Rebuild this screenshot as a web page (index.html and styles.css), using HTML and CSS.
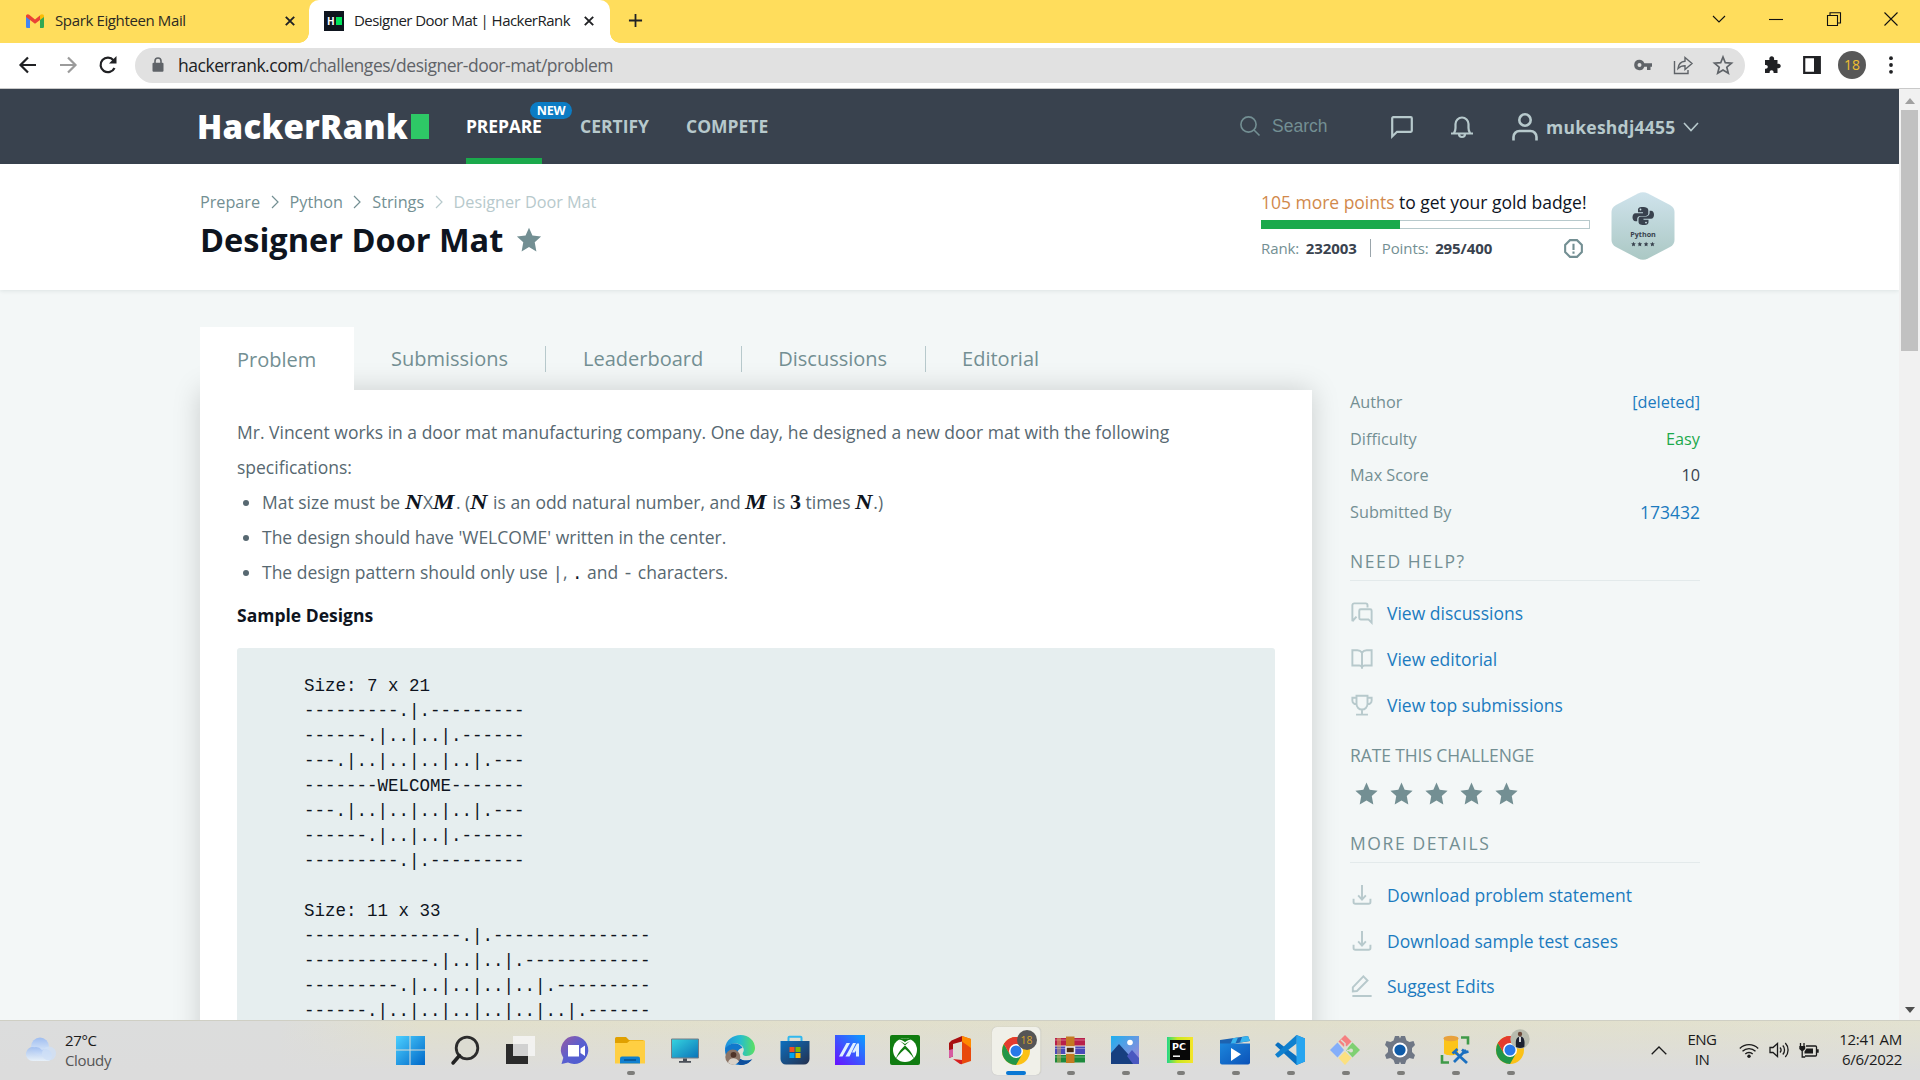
FILE: index.html
```html
<!DOCTYPE html>
<html lang="en">
<head>
<meta charset="utf-8">
<title>Designer Door Mat | HackerRank</title>
<link rel="stylesheet" href="styles.css">
</head>
<body>
<svg class="defs" aria-hidden="true">
  <defs>
    <symbol id="star" viewBox="0 0 24 24"><path d="M12 0.6l3.3 7.6 8.3 0.8-6.1 5.6 1.6 8.8L12 19.3l-7.1 4.1 1.6-8.8L0.4 9l8.3-.8z"/></symbol>
    <symbol id="download" viewBox="0 0 24 24"><path d="M12 1v16M7.800 12.500l4.200 4.500 4.200-4.500M2.800 16v3.500a2 2 0 0 0 2 2h14.400a2 2 0 0 0 2-2V16"/></symbol>
    <symbol id="crumb" viewBox="0 0 8 14"><path d="M1 1l6 6-6 6"/></symbol>
    <symbol id="chrome" viewBox="0 0 30 30">
      <circle cx="15" cy="15" r="14" fill="#fbc116"/>
      <path d="M15 15L2.900 8A14 14 0 0 1 27.100 8H15z" fill="#e33b2e"/>
      <path d="M2.900 8A14 14 0 0 0 15 29l6-10.500L15 15 9 18.500z" fill="#229648"/>
      <path d="M2.900 8L9 18.500 15 8H27.100A14 14 0 0 0 2.900 8z" fill="#e33b2e"/>
      <circle cx="15" cy="15" r="7" fill="#fff"/><circle cx="15" cy="15" r="5.500" fill="#2879e8"/>
    </symbol>
    <linearGradient id="gWin" x1="0" y1="0" x2="1" y2="1"><stop offset="0" stop-color="#4cd0ff"/><stop offset="1" stop-color="#0067c8"/></linearGradient>
    <linearGradient id="gChat" x1="0" y1="0" x2="1" y2="1"><stop offset="0" stop-color="#9a5aa0"/><stop offset=".5" stop-color="#5a5fd0"/><stop offset="1" stop-color="#4a5bd0"/></linearGradient>
    <linearGradient id="gPc" x1="0" y1="0" x2="1" y2="1"><stop offset="0" stop-color="#35d5e0"/><stop offset="1" stop-color="#0b72b8"/></linearGradient>
    <linearGradient id="gEdge" x1="0" y1="0" x2="1" y2="0"><stop offset="0" stop-color="#1f8fe0"/><stop offset=".5" stop-color="#25bcd0"/><stop offset="1" stop-color="#5be060"/></linearGradient>
    <linearGradient id="gStore" x1="0" y1="0" x2="1" y2="1"><stop offset="0" stop-color="#0d70c0"/><stop offset="1" stop-color="#24304e"/></linearGradient>
    <linearGradient id="gMa" x1="0" y1="1" x2="1" y2="0"><stop offset="0" stop-color="#6a10ff"/><stop offset="1" stop-color="#0aa0ff"/></linearGradient>
    <linearGradient id="gFilm" x1="0" y1="0" x2="1" y2="1"><stop offset="0" stop-color="#1c86dc"/><stop offset="1" stop-color="#0b52b8"/></linearGradient>
    <linearGradient id="gHex" x1="0" y1="0" x2="0" y2="1"><stop offset="0" stop-color="#cfe3ec"/><stop offset="1" stop-color="#abc8c4"/></linearGradient>
    <linearGradient id="gCloud" x1="0" y1="0" x2="0" y2="1"><stop offset="0" stop-color="#9fbdf0"/><stop offset="1" stop-color="#e9f3fc"/></linearGradient>
    <linearGradient id="gPhoto" x1="0" y1="0" x2="1" y2="1"><stop offset="0" stop-color="#1fb0ee"/><stop offset="1" stop-color="#a783d8"/></linearGradient>
    <linearGradient id="gPyc" x1="0" y1="0" x2="1" y2="0"><stop offset="0" stop-color="#21d789"/><stop offset=".4" stop-color="#c8e820"/><stop offset="1" stop-color="#f5e52a"/></linearGradient>
  </defs>
</svg>

<header class="tabstrip">
  <div class="tab tab-mail">
    <svg class="fav-mail" viewBox="0 0 18 14"><path d="M0 2v10.500C0 13.500.6 14 1.500 14H4V5z" fill="#4285f4"/><path d="M18 2v10.500c0 1-.6 1.500-1.500 1.500H14V5z" fill="#34a853"/><path d="M0 2C0 .5 2 -.4 3.200.8L9 5.500 14.800.8 14 6 9 9.800 4 6 0 3z" fill="#ea4335"/><path d="M14 6V1.300C15.500-.4 18 .2 18 2.200V3z" fill="#fbbc04"/></svg>
    <span class="tab-title t-mail">Spark Eighteen Mail</span>
    <svg class="x" viewBox="0 0 10 10"><path d="M.8.8l8.400 8.400M9.200.8L.8 9.200"/></svg>
  </div>
  <div class="tab tab-active">
    <span class="fav-hr"><b>H</b><i></i></span>
    <span class="tab-title t-hr">Designer Door Mat | HackerRank</span>
    <svg class="x" viewBox="0 0 10 10"><path d="M.8.8l8.400 8.400M9.200.8L.8 9.200"/></svg>
  </div>
  <svg class="plus" viewBox="0 0 16 16"><path d="M8 1v14M1 8h14"/></svg>
  <div class="winbtns">
    <svg viewBox="0 0 14 14"><path d="M1 4l6 6 6-6"/></svg>
    <svg viewBox="0 0 14 14"><path d="M0 7.500h14"/></svg>
    <svg viewBox="0 0 14 14"><path d="M.5 3.500h10v10H.5zM3 3V.8h10.500V11H11"/></svg>
    <svg viewBox="0 0 14 14"><path d="M.5.5l13 13M13.500.5l-13 13"/></svg>
  </div>
</header>

<div class="toolbar">
  <svg class="tb-ico" viewBox="0 0 20 20"><path d="M18 10H3M10 2.500L2.500 10l7.500 7.500"/></svg>
  <svg class="tb-ico dim" viewBox="0 0 20 20"><path d="M2 10h15M10 2.500l7.500 7.500-7.500 7.500"/></svg>
  <svg class="tb-ico" viewBox="0 0 20 20"><path d="M16.500 13A7.300 7.300 0 1 1 15.500 5.200"/><path d="M18.500 1v7.500H11z" fill="#202124" stroke="none"/></svg>
  <div class="omnibox">
    <svg class="lock" viewBox="0 0 12 16"><path d="M1.500 5.800h9a1 1 0 0 1 1 1v7a1 1 0 0 1-1 1h-9a1 1 0 0 1-1-1v-7a1 1 0 0 1 1-1z" fill="#5f6368"/><path d="M3 6V4a3 3 0 0 1 6 0v2" fill="none" stroke="#5f6368" stroke-width="1.600"/></svg>
    <span class="url"><b>hackerrank.com</b>/challenges/designer-door-mat/problem</span>
    <svg class="key" viewBox="0 0 18 12"><path fill-rule="evenodd" d="M5.500.8a5.200 5.200 0 0 1 4.800 3.500H18v3.400h-1.500V11H13V7.700h-2.700A5.200 5.200 0 1 1 5.500.8zm0 3.200a2 2 0 1 0 0 4 2 2 0 0 0 0-4z" fill="#5f6368"/></svg>
    <svg class="om-ico" viewBox="0 0 20 20"><path d="M1.500 6v12.500H15V15M5 13.500C5.500 9 8 6.500 12 6.200V2.500l7 6-7 6v-3.700c-3 0-5 .7-7 2.700z"/></svg>
    <svg class="om-ico" viewBox="0 0 20 20"><path d="M10 2l2.300 5.700 6.200.5-4.700 4 1.500 6L10 15l-5.300 3.200 1.500-6-4.700-4 6.200-.5z" stroke-width="1.700"/></svg>
  </div>
  <svg class="puzzle" viewBox="0 0 18 18"><path fill="#202124" d="M2 4h4.500C5.800 2 7 .3 8.700.3S11.600 2 11 4h3.500v4c1.700-.7 3.200.4 3.200 2s-1.500 2.700-3.200 2v5h-4c.4-1.700-.5-2.800-1.900-2.800S6.300 15.300 6.700 17H2v-4.300c1.700.4 2.800-.6 2.800-1.900S3.700 8.600 2 9z"/></svg>
  <svg class="panel" viewBox="0 0 18 18"><path d="M1.200 1.200h15.600v15.600H1.200z" fill="none" stroke="#202124" stroke-width="2.200"/><path d="M11 1h6v16h-6z" fill="#202124"/></svg>
  <span class="avatar">18</span>
  <svg class="dots" viewBox="0 0 4 18"><circle cx="2" cy="2.200" r="1.900"/><circle cx="2" cy="9" r="1.900"/><circle cx="2" cy="15.800" r="1.900"/></svg>
</div>

<div class="viewport">
<main class="page">
  <nav class="nav">
    <div class="logo"><span>HackerRank</span><i></i></div>
    <a class="nav-link prepare">PREPARE<em>NEW</em></a>
    <a class="nav-link certify">CERTIFY</a>
    <a class="nav-link compete">COMPETE</a>
    <div class="nav-search">
      <svg viewBox="0 0 20 20"><circle cx="8.500" cy="8.500" r="7.600"/><path d="M14 14l5.500 5.500"/></svg>
      <span>Search</span>
    </div>
    <svg class="nav-ico chat" viewBox="0 0 22 22"><path d="M1.200 20.500V2.200a1 1 0 0 1 1-1h17.600a1 1 0 0 1 1 1v12.600a1 1 0 0 1-1 1H6z"/></svg>
    <svg class="nav-ico bell" viewBox="0 0 24 22"><path d="M1 17.500h22M4 17c1-1.500 1.500-3 1.500-5V8a6.500 6.500 0 0 1 13 0v4c0 2 .5 3.500 1.500 5M9 18a3 3 0 0 0 6 0"/></svg>
    <svg class="nav-ico user" viewBox="0 0 26 28"><circle cx="13" cy="7" r="5.700"/><path d="M1.500 27.500V24a6 6 0 0 1 6-6h11a6 6 0 0 1 6 6v3.500"/></svg>
    <span class="uname">mukeshdj4455</span>
    <svg class="caret" viewBox="0 0 16 10"><path d="M1 1l7 7.500L15 1"/></svg>
  </nav>

  <section class="head">
    <div class="head-left">
      <div class="crumbs">
        <span>Prepare</span><svg><use href="#crumb"/></svg>
        <span>Python</span><svg><use href="#crumb"/></svg>
        <span>Strings</span><svg class="faint"><use href="#crumb"/></svg>
        <span class="faint">Designer Door Mat</span>
      </div>
      <h1>Designer Door Mat<svg><use href="#star"/></svg></h1>
    </div>
    <div class="head-right">
      <p class="more"><span>105 more points</span> to get your gold badge!</p>
      <div class="bar"><i></i></div>
      <div class="rank">
        <span>Rank:</span><b>232003</b><i></i><span>Points:</span><b>295/400</b>
        <svg viewBox="0 0 20 20"><path d="M6.300 1.200h7.400l5.100 5.100v7.400l-5.100 5.100H6.300l-5.100-5.100V6.300z"/><path d="M10 5v6.500M10 13.200v2.200"/></svg>
      </div>
    </div>
    <svg class="badge" viewBox="0 0 64 68">
      <path d="M27 1.500q5-2.500 10 0l22 11.500q4.500 2.500 4.500 7v28q0 4.500-4.500 7l-22 11.500q-5 2.500-10 0L5 55q-4.500-2.500-4.500-7V20q0-4.500 4.500-7z" fill="url(#gHex)"/>
      <g fill="#39424e"><path d="M31.500 15c-4 0-4.500 1.500-4.500 3.300v2h5v.9h-7.500c-2 0-3 1.800-3 4s1 4 3 4h1.700v-2.300c0-1.700 1.500-3 3.200-3H35c1.400 0 2.300-1 2.300-2.300v-3.300c0-2-1.700-3.300-5.800-3.300z"/><path d="M33 33c4 0 4.500-1.500 4.500-3.300v-2h-5v-.9H40c2 0 3-1.800 3-4s-1-4-3-4h-1.400v2.300c0 1.700-1.500 3.400-3.200 3.400H29.800c-1.400 0-2.300 1-2.300 2.300v2.900c0 2 1.500 3.300 5.500 3.300z"/></g>
      <circle cx="29.500" cy="17.500" r=".9" fill="#cfe0e6"/><circle cx="35" cy="30.600" r=".9" fill="#cfe0e6"/>
      <text x="32" y="45">Python</text>
      <g fill="#39424e"><use href="#star" x="20" y="49.500" width="5" height="5"/><use href="#star" x="26.300" y="49.500" width="5" height="5"/><use href="#star" x="32.600" y="49.500" width="5" height="5"/><use href="#star" x="38.900" y="49.500" width="5" height="5"/></g>
    </svg>
  </section>

  <div class="content">
    <section class="problem">
      <div class="tabs">
        <a class="on">Problem</a><a>Submissions</a><a>Leaderboard</a><a>Discussions</a><a>Editorial</a>
      </div>
      <article class="card">
        <p>Mr. Vincent works in a door mat manufacturing company. One day, he designed a new door mat with the following specifications:</p>
        <ul>
          <li>Mat size must be <var>N</var>X<var class="m">M</var>. (<var>N</var> is an odd natural number, and <var class="m">M</var> is <var class="num">3</var> times <var>N</var>.)</li>
          <li>The design should have 'WELCOME' written in the center.</li>
          <li>The design pattern should only use <code>|</code>, <code class="dot">.</code> and <code>-</code> characters.</li>
        </ul>
        <h2>Sample Designs</h2>
<pre>Size: 7 x 21
---------.|.---------
------.|..|..|.------
---.|..|..|..|..|.---
-------WELCOME-------
---.|..|..|..|..|.---
------.|..|..|.------
---------.|.---------

Size: 11 x 33
---------------.|.---------------
------------.|..|..|.------------
---------.|..|..|..|..|.---------
------.|..|..|..|..|..|..|.------</pre>
      </article>
    </section>
    <aside class="side">
      <dl>
        <div><dt>Author</dt><dd class="blue">[deleted]</dd></div>
        <div><dt>Difficulty</dt><dd class="green">Easy</dd></div>
        <div><dt>Max Score</dt><dd>10</dd></div>
        <div><dt>Submitted By</dt><dd class="blue big">173432</dd></div>
      </dl>
      <h3>NEED HELP?</h3>
      <a class="link v"><svg viewBox="0 0 24 24"><path d="M1.500 21V3.500a2 2 0 0 1 2-2H16a2 2 0 0 1 2 2V6M1.500 21L6 16M10.500 8H21a1.500 1.500 0 0 1 1.500 1.500V22.500L19 19h-8.500A1.500 1.500 0 0 1 9 17.500v-8A1.500 1.500 0 0 1 10.500 8z"/></svg>View discussions</a>
      <a class="link v"><svg viewBox="0 0 24 24"><path d="M12 5v17.500M12 5c-1.500-2-3-2.500-5-2.500H1.500V19H9c1.500 0 2.500.7 3 2M12 5c1.500-2 3-2.500 5-2.500h5.500V19H15c-1.500 0-2.500.7-3 2"/></svg>View editorial</a>
      <a class="link v"><svg viewBox="0 0 24 24"><path d="M6 2h12v9a6 6 0 0 1-12 0zM12 17v5.500M5.500 22.500h13M6 4H1.500v3a4 4 0 0 0 4.500 4M18 4h4.500v3a4 4 0 0 1-4.500 4"/></svg>View top submissions</a>
      <h4>RATE THIS CHALLENGE</h4>
      <div class="stars"><svg><use href="#star"/></svg><svg><use href="#star"/></svg><svg><use href="#star"/></svg><svg><use href="#star"/></svg><svg><use href="#star"/></svg></div>
      <h3 class="h-more">MORE DETAILS</h3>
      <a class="link"><svg><use href="#download"/></svg>Download problem statement</a>
      <a class="link"><svg><use href="#download"/></svg>Download sample test cases</a>
      <a class="link"><svg viewBox="0 0 24 24"><path d="M2 18v-4.500L13.500 1.500 18 6 6.500 17.500zM1.500 23h21"/></svg>Suggest Edits</a>
    </aside>
  </div>
</main>
<div class="scroll">
  <svg viewBox="0 0 10 6"><path d="M0 6l5-6 5 6z" fill="#a0a0a0"/></svg>
  <i></i>
  <svg class="down" viewBox="0 0 10 6"><path d="M0 0l5 6 5-6z" fill="#505050"/></svg>
</div>
</div>

<footer class="taskbar">
  <div class="weather">
    <svg viewBox="0 0 30 24"><circle cx="14" cy="9.500" r="9" fill="url(#gCloud)"/><path d="M7 24a7 7 0 1 1 1.500-13.800A8 8 0 0 1 16 13a6 6 0 1 1 7 11z" fill="url(#gCloud)" opacity=".9"/><circle cx="23" cy="16.500" r="7" fill="#cfe0f6" opacity=".8"/></svg>
    <div><p>27°C</p><p class="cloudy">Cloudy</p></div>
  </div>
  <div class="apps">
    <div><svg viewBox="0 0 30 30"><path d="M1 1h13.500v13.500H1zM15.500 1H30v13.500H15.500zM1 15.500h13.500V30H1zM15.500 15.500H30V30H15.500z" fill="url(#gWin)"/></svg></div>
    <div><svg viewBox="0 0 30 30"><circle cx="17" cy="13" r="10.800" fill="#dcdcd2" stroke="#2c2c2c" stroke-width="2.800"/><path d="M9.500 20.500L3 28" stroke="#222" stroke-width="3.500" stroke-linecap="round"/></svg></div>
    <div><svg viewBox="0 0 30 30"><path d="M1 9h22v20H1z" fill="#2b2b2b"/><path d="M8 1h22v20H8z" fill="#f7f7f7" opacity=".82"/></svg></div>
    <div><svg viewBox="0 0 30 30"><path d="M15 1a14 14 0 1 1-7 26.500L1.500 29l1.800-6.300A14 14 0 0 1 15 1z" fill="url(#gChat)"/><path d="M8 10h11v11.500H8zM20.500 13.500L25 10.500v10.500l-4.500-3z" fill="#fff"/></svg></div>
    <div class="run"><svg viewBox="0 0 30 30"><path d="M0 3.500a1.500 1.500 0 0 1 1.500-1.500H11l3 3H28.500v8H0z" fill="#e0a000"/><path d="M0 8h12l3-2.500h15V28.500H0z" fill="#ffcf42"/><path d="M5 28.500v-5a2 2 0 0 1 2-2h16a2 2 0 0 1 2 2v5z" fill="#1080d0"/><path d="M9 25h12" stroke="#07508c" stroke-width="1.500"/></svg></div>
    <div><svg viewBox="0 0 30 30"><path d="M1.500 4h27v19h-27z" fill="url(#gPc)" stroke="#777d85"/><path d="M13 23.500h4V26h-4zM9 26h12v1.800H9z" fill="#4a4f57"/></svg></div>
    <div><svg viewBox="0 0 30 30"><path d="M0 13C1 5 8 0 15.500 0 24 0 30 6 30 13c0 5-4 8-8.500 8-3 0-4.500-1.500-3.500-3.500.5-1 1-2 .7-3.500C18 10.500 14 8 9.500 8.500 4 9 1 12 0 17z" fill="url(#gEdge)"/><path d="M0 15c1-4 5-6.500 9.500-6.500 4 0 7 2 8 4.500-4 .5-6 4-5 8 1.500 4 8 6 14 3.500C23.500 28.500 19.500 30 15 30 6.500 30 0 23 0 15z" fill="#1178cc"/><path d="M11 15c-1 8 8 13.500 16.500 9C24 28.500 20 30 15 30c-5-3-7.500-11-4-15z" fill="#0e4f9c"/><circle cx="7.800" cy="22" r="7.500" fill="#8b7466"/><circle cx="8.500" cy="19.800" r="2.900" fill="#4f3428"/><path d="M3 27.500c1-5 8-6 11-1a7.500 7.500 0 0 1-11 1z" fill="#d8d1c8"/></svg></div>
    <div><svg viewBox="0 0 30 30"><path d="M8.500 7V2.800a1 1 0 0 1 1-1h11a1 1 0 0 1 1 1V7" fill="none" stroke="#31b8ee" stroke-width="2"/><path d="M.5 6h29v18a5.500 5.500 0 0 1-5.500 5.500H6A5.500 5.500 0 0 1 .5 24z" fill="url(#gStore)"/><path d="M9.500 12h5v5h-5z" fill="#f25022"/><path d="M15.500 12h5v5h-5z" fill="#7fba00"/><path d="M9.500 18h5v5h-5z" fill="#00a4ef"/><path d="M15.500 18h5v5h-5z" fill="#ffb900"/></svg></div>
    <div><svg viewBox="0 0 30 30"><path d="M0 0h30v30H0z" fill="url(#gMa)"/><path d="M4 21.500L11.500 8h3.500L7.500 21.500zM10.500 21.500L18 8h3l-6.500 13.500zM17 17.500L22 8.500h2v13h-3v-6l-1.200 2z" fill="#dff0ff"/></svg></div>
    <div><svg viewBox="0 0 30 30"><rect width="30" height="30" rx="2" fill="#107c10"/><circle cx="15" cy="15" r="12" fill="#fff"/><path d="M8.500 5C11 4 14 6.500 15 7.300 16 6.500 19 4 21.500 5 19 2.500 11 2.500 8.500 5zM5.800 24.500C7 19 11.500 13.500 15 10.500c3.500 3 8 8.500 9.200 14-1.500-3.500-6-8-9.200-10.500-3.200 2.500-7.700 7-9.200 10.500z" fill="#107c10"/><path d="M8 5.500c3 .5 5.500 3.500 7 5 1.500-1.500 4-4.500 7-5-2.500.5-5 2-7 3.500-2-1.500-4.500-3-7-3.500z" fill="#107c10"/></svg></div>
    <div><svg viewBox="0 0 30 30"><path d="M17 1l9 3v22l-9 3z" fill="#e8490c"/><path d="M17 1L6.500 5.500 4 8v15l4-1.500V9l9-2.500z" fill="#a80f10"/><path d="M4 15v8l4-1.500V14z" fill="#d65aa0"/><path d="M8 24l9 1v4.200L15 29z" fill="#d61f1f"/><path d="M17 1l9 3v9l-9-6.500z" fill="#ff8a00"/></svg></div>
    <div class="current"><svg class="c-ico"><use href="#chrome"/></svg><span class="n18">18</span></div>
    <div class="run"><svg viewBox="0 0 30 30"><path d="M0 3h30v7.500H0z" fill="#b8204a"/><path d="M0 11.500h30v7.500H0z" fill="#4a4ab8"/><path d="M0 20h30v7.500H0z" fill="#1c8a3c"/><path d="M0 5h30M0 13.500h30M0 22h30" stroke="#fff" stroke-opacity=".35"/><path d="M3 3v24.500M5 3v24.500" stroke="#d8b060" stroke-width="1"/><path d="M11 1.500h8.500v26.500H11z" fill="#c47a22"/><path d="M11 12h8.500v6H11z" fill="#4a2a12" stroke="#eee" stroke-width="1.500"/></svg></div>
    <div class="run"><svg viewBox="0 0 30 30"><path d="M1 1h28v28H1z" fill="url(#gPhoto)"/><path d="M1 29V18L9 9l18 20z" fill="#173f80"/><path d="M17 21l5-6 7 8v6h-6z" fill="#4a58c0"/><circle cx="20" cy="7.500" r="2.800" fill="#fff"/></svg></div>
    <div class="run"><svg viewBox="0 0 30 30"><path d="M2 2h26v26H2z" fill="url(#gPyc)"/><path d="M5 5h20v20H5z" fill="#080808"/><text class="pc" x="7" y="14.500">PC</text><path d="M8 21.200h7" stroke="#fff" stroke-width="1.500"/></svg></div>
    <div class="run"><svg viewBox="0 0 30 30"><path d="M0 5l28-4 2 5-30 5z" fill="#1d62b0"/><path d="M13 3.200l5-.7-2.500 5.700-5 .8zM22 2l6-1 2 5-10 1.500z" fill="#38b4ee"/><path d="M0 8.500h30v19a2 2 0 0 1-2 2H2a2 2 0 0 1-2-2z" fill="url(#gFilm)"/><path d="M11 13l10 6.300L11 26z" fill="#fff"/></svg></div>
    <div class="run"><svg viewBox="0 0 30 30"><path d="M21.500 0L30 3.500v23L21.500 30 0 10l2.500-2.500h1L22 21.500z" fill="#0a70c0"/><path d="M21.500 0L30 3.500v23L21.500 30z" fill="#27a5f0"/><path d="M0 19.500L21.500 0v8.500L3.500 22.500h-1z" fill="#0f80cf"/></svg></div>
    <div class="run"><svg viewBox="0 0 30 30"><path d="M15 0l6.500 6.500L15 13 8.500 6.500z" fill="#f58080"/><path d="M7.500 7.500L14 15l-6.500 7.500L0 15z" fill="#84aefa"/><path d="M22.500 7.500L30 15l-7.500 7.500L16 15z" fill="#7fd072"/><path d="M15 16.500l6.500 6.500-6.500 7-6.500-7z" fill="#fbe080"/><path d="M11 5l4 3.500v5M17 15.500h5" stroke="#deddd3" stroke-width="1.500" fill="none"/><circle cx="15.500" cy="13" r="2" fill="#deddd3"/><circle cx="21" cy="15.500" r="2" fill="#deddd3"/></svg></div>
    <div class="run"><svg viewBox="0 0 30 30"><path d="M11 1h3l1 2.500L16 1h4l1.500 4.500 3 1.500 4-1 1.500 4-3 3v4l3 3-1.500 4-4-1-3 2L20 29h-4l-1-2.500L14 29h-4l-1.500-4-3-2-4 1L0 20l3-3v-4l-3-3 1.500-4 4 1 3-1.500L10 1z" fill="#6f7785"/><circle cx="15" cy="15" r="7.500" fill="#fff"/><circle cx="15" cy="15" r="5.600" fill="#0f5ba8"/></svg></div>
    <div class="run"><svg viewBox="0 0 30 30"><path d="M4 3v15c0 3 14 3 14 0V3z" fill="#fcc41a"/><ellipse cx="11" cy="3.500" rx="7.500" ry="2.700" fill="#e8a13c"/><path d="M21 2.500h7v7M2 20v7.500h7" fill="none" stroke="#3f9a48" stroke-width="2.600"/><path d="M14 27l12-12M15 17l12 11" stroke="#1c70c0" stroke-width="2.800"/><path d="M12.500 18.500l5-4.500M22 14.500l3 3 3.500-1" stroke="#1c70c0" stroke-width="2.600" fill="none"/></svg></div>
    <div class="run prof"><svg><use href="#chrome"/></svg><svg class="person" viewBox="0 0 20 20"><circle cx="10" cy="10" r="9.700" fill="#b8bcae"/><path d="M6 18c-.5-5-.5-10 4-10.500s5 5.500 4.300 10.500a9.700 9.700 0 0 1-8.300 0z" fill="#1c2230"/><circle cx="10" cy="5" r="2.200" fill="#6b4a3a"/><path d="M9.200 8h1.600v5H9.200z" fill="#fff"/></svg></div>
  </div>
  <div class="tray">
    <svg class="up" viewBox="0 0 16 9"><path d="M.7 8.300L8 1l7.300 7.300"/></svg>
    <div class="lang"><p>ENG</p><p>IN</p></div>
    <svg class="wifi" viewBox="0 0 20 15"><path d="M.8 5.500a13 13 0 0 1 18.400 0M3.500 8.300a9.200 9.200 0 0 1 13 0M6.300 11a5.300 5.300 0 0 1 7.400 0"/><circle cx="10" cy="13.200" r="1.700"/></svg>
    <svg class="vol" viewBox="0 0 20 16"><path d="M1 5.500h3L8.500 1.500v13L4 10.500H1zM11 5.500c1.300 1.500 1.300 3.500 0 5M13.800 3.500c2.300 2.500 2.300 6.500 0 9M16.300 1c3.700 4 3.700 10 0 14"/></svg>
    <svg class="bat" viewBox="0 0 20 15"><path d="M7 3h9.500a1 1 0 0 1 1 1v8a1 1 0 0 1-1 1H6"/><path d="M1.500 0v3M5 0v3M3.200 7v7h3" /><path d="M.3 3h5.900v3L4 8H2.500L.3 6zM7.500 5.500h6.500v5H5.500v-2zM18 6.300h1.700v3.400H18z" fill="#1b1b1b" stroke="none"/></svg>
    <div class="clock"><p>12:41 AM</p><p class="date">6/6/2022</p></div>
  </div>
</footer>
</body>
</html>
```
FILE: styles.css
```css
* { box-sizing: border-box; }
body { margin: 0; width: 1920px; height: 1080px; overflow: hidden; background: #fff; font-family: "Open Sans", "Noto Sans", sans-serif; }
p, h1, h2, h3, h4, ul, dl, dd, pre { margin: 0; font-weight: 400; }
svg { display: block; flex: none; overflow: visible; }
.defs { position: absolute; width: 0; height: 0; }

/* browser chrome */
.tabstrip { display: flex; align-items: center; height: 43px; background: #ffdd5c; }
.tab { display: flex; align-items: center; height: 43px; }
.tab-mail { width: 309px; padding: 0 14px 2px 26px; }
.tab-active { width: 301px; padding: 0 16px 2px 15px; background: #fff; border-radius: 10px 10px 0 0; position: relative; }
.tab-active::before, .tab-active::after { content: ""; position: absolute; bottom: 0; width: 10px; height: 10px; }
.tab-active::before { left: -10px; background: radial-gradient(circle at 0 0, transparent 9.500px, #fff 10px); }
.tab-active::after { right: -10px; background: radial-gradient(circle at 100% 0, transparent 9.500px, #fff 10px); }
.fav-mail { width: 18px; height: 14px; margin-right: 11px; }
.fav-hr { display: flex; align-items: center; gap: 1px; width: 20px; height: 20px; padding-left: 3px; margin-right: 10px; background: #0e141e; flex: none; }
.fav-hr b { color: #fff; font-size: 10px; line-height: 10px; }
.fav-hr i { width: 6px; height: 8px; background: #00e35c; }
.tab-title { flex: 1; font-size: 15px; line-height: 20px; padding-bottom: 2px; color: #2c2a22; white-space: nowrap; }
.t-mail { letter-spacing: -.37px; }
.t-hr { letter-spacing: -.53px; color: #202124; }
.x { width: 10px; height: 10px; }
.x path, .plus path { stroke: #202124; stroke-width: 1.900; fill: none; }
.plus { width: 15px; height: 15px; margin: 0 0 2px 18px; }
.winbtns { display: flex; gap: 43.500px; margin-left: auto; margin-right: 22px; padding-bottom: 5px; }
.winbtns svg { width: 14px; height: 14px; fill: none; stroke: #111; stroke-width: 1.100; }
.toolbar { display: flex; align-items: center; height: 46px; border-bottom: 1px solid #c9c9c9; padding: 0 0 1px 18px; background: #fff; }
.tb-ico { width: 20px; height: 20px; margin-right: 20px; fill: none; stroke: #202124; stroke-width: 2.200; }
.dim { stroke: #9b9b9b; }
.omnibox { display: flex; align-items: center; width: 1610px; height: 35px; margin: 0 18px 0 -3px; padding: 0 12px 0 17px; border-radius: 18px; background: #e1e1e1; }
.lock { width: 12px; height: 16px; margin-right: 14px; }
.url { flex: 1; font-size: 17.500px; letter-spacing: -.47px; color: #5f6368; white-space: nowrap; }
.url b { font-weight: 400; color: #202124; }
.key { width: 18px; height: 12px; margin-right: 21px; }
.om-ico { width: 20px; height: 20px; margin-right: 20px; fill: none; stroke: #5f6368; stroke-width: 1.400; }
.om-ico:last-child { margin-right: 0; }
.puzzle { width: 18px; height: 18px; margin-right: 22px; }
.panel { width: 18px; height: 18px; margin-right: 17px; }
.avatar { width: 28px; height: 28px; margin-right: 23px; border-radius: 50%; background: #585858; color: #f0c030; font-size: 14px; line-height: 28px; text-align: center; }
.dots { width: 4px; height: 18px; fill: #202124; }

/* web page */
.viewport { display: flex; height: 931px; }
.page { width: 1899px; height: 931px; overflow: hidden; background: #f3f7f7; }
.nav { display: flex; align-items: center; height: 75px; padding-left: 200px; background: #39424e; }
.logo { display: flex; align-items: center; width: 229px; margin-right: 37px; }
.logo span { width: 211px; font: 800 33px/40px "Open Sans", sans-serif; letter-spacing: .3px; color: #fff; white-space: nowrap; margin-left: -3px; margin-right: 3px; }
.logo i { width: 18px; height: 25px; background: #2ec866; }
.nav-link { position: relative; height: 75px; line-height: 75px; font-size: 17.500px; font-weight: 700; letter-spacing: -.15px; color: #b7c9cc; }
.prepare { width: 76px; margin-right: 38px; color: #fff; border-bottom: 6px solid #1ba94c; }
.prepare em { position: absolute; left: 64px; top: 13px; width: 42px; height: 17px; border-radius: 9px; background: #0c7cc4; font: 700 12.500px/17px "Open Sans", sans-serif; letter-spacing: -.2px; text-align: center; color: #fff; }
.certify { width: 106px; letter-spacing: 0; }
.compete { width: 554px; letter-spacing: 0; }
.nav-search { display: flex; align-items: center; gap: 12px; width: 151px; font: 17.500px/24px "Liberation Sans", sans-serif; color: #738f93; padding-bottom: 2px; }
.nav-search svg { width: 20px; height: 20px; fill: none; stroke: #738f93; stroke-width: 1.600; }
.nav-ico { fill: none; stroke: #b7c9cc; stroke-width: 2.200; }
.chat { width: 22px; height: 22px; margin-right: 37px; }
.bell { width: 24px; height: 22px; margin-right: 38px; }
.user { width: 26px; height: 28px; margin-right: 8px; stroke-width: 2.600; }
.uname { width: 137px; font-size: 17.500px; font-weight: 700; letter-spacing: .25px; color: #b7c9cc; }
.caret { width: 16px; height: 10px; fill: none; stroke: #b7c9cc; stroke-width: 1.600; }
.head { display: flex; height: 126px; padding: 26px 0 0 200px; background: #fff; box-shadow: 0 1px 4px rgba(30,60,60,.1); }
.head-left { width: 1060px; }
.crumbs { display: flex; align-items: center; height: 24px; font-size: 16.250px; letter-spacing: -.03px; color: #738f93; }
.crumbs svg { width: 8px; height: 14px; margin: 0 11px 0 10.500px; fill: none; stroke: #738f93; stroke-width: 1.200; }
.crumbs .faint { color: #b7c9cc; stroke: #b7c9cc; }
h1 { display: flex; align-items: center; height: 40px; margin-top: 5px; font-size: 32.500px; font-weight: 700; color: #0e141e; white-space: nowrap; }
h1 svg { width: 26px; height: 25px; margin-left: 13px; fill: #738f93; }
.head-right { width: 330px; margin-right: 21px; padding-left: 1px; }
.more { height: 24px; font-size: 17.500px; line-height: 24px; letter-spacing: -.02px; color: #0e141e; white-space: nowrap; }
.more span { color: #d1894b; }
.bar { height: 9px; margin: 6px 0 7px; border: 1px solid #b7c9cc; }
.bar i { display: block; width: 139px; height: 9px; margin: -1px; background: #1ba94c; }
.rank { display: flex; align-items: center; height: 24px; font-size: 15px; letter-spacing: -.08px; color: #738f93; }
.rank b { margin-left: 6.500px; color: #39424e; }
.rank i { width: 1.500px; height: 18px; margin: 0 10.500px 0 13px; background: #9aa5ab; }
.rank svg { width: 19px; height: 19px; margin-left: auto; margin-right: 7px; fill: none; stroke: #738f93; stroke-width: 2.200; }
.badge { width: 64px; height: 68px; margin-top: 2px; }
.badge text { font-size: 7.200px; font-weight: 700; text-anchor: middle; fill: #39424e; }
.content { display: flex; gap: 38px; padding: 37px 0 0 200px; }
.problem { width: 1112px; }
.tabs { display: flex; height: 63px; align-items: center; font-size: 20px; color: #738f93; }
.tabs a { line-height: 26px; margin-top: 1px; padding: 0 37.500px 0 36.500px; border-right: 1px solid #b7c9cc; }
.tabs a.on { position: relative; z-index: 2; line-height: 65px; height: 63px; width: 154px; margin: 0 .5px 0 0; padding: 0 37px; border: 0; background: #fff; }
.tabs a:last-child { border: 0; }
.card { position: relative; height: 720px; padding: 25px 37px; background: #fff; box-shadow: 0 0 26px rgba(0,0,0,.17); font-size: 17.500px; line-height: 35px; color: #576871; }
.card ul { padding-left: 25px; }
var { display: inline-block; width: 18.300px; font: italic bold 22px/20px "Liberation Serif", serif; color: #0e141e; transform: scaleX(1.1); transform-origin: 0 50%; }
var.m { width: 22.800px; }
var.num { width: 11px; font-style: normal; transform: none; }
code { font: 17.500px/20px "Liberation Mono", monospace; }
.dot { color: #0e141e; }
h2 { margin-top: 12px; font-size: 17.500px; font-weight: 700; line-height: 26px; color: #0e141e; }
pre { height: 500px; margin-top: 20px; padding: 26px 67px; border-radius: 3px; background: #e6eeef; font: 17.500px/25px "Liberation Mono", monospace; color: #0e141e; }
.side { width: 350px; padding-top: 57px; color: #738f93; }
dl div { display: flex; justify-content: space-between; height: 36.700px; line-height: 36.700px; font-size: 16.250px; }
dd { color: #39424e; }
.blue { color: #1b7bbf; }
.big { font-size: 17.500px; }
.green { color: #1ba94c; }
h3 { margin: 18px 0 9.500px; padding-bottom: 7.300px; border-bottom: 1px solid #e3eaeb; font-size: 17.500px; line-height: 24px; letter-spacing: 1.600px; }
.h-more { margin-top: 25px; }
.link { display: flex; align-items: center; gap: 14px; height: 45.600px; font-size: 17.500px; color: #1b7bbf; white-space: nowrap; }
.link svg { width: 22px; height: 22px; margin-left: 1px; fill: none; stroke: #b7c9cc; stroke-width: 2.100; }
h4 { margin-top: 15.200px; font-size: 17.500px; line-height: 24px; letter-spacing: -.1px; }
.stars { display: flex; gap: 12px; height: 24px; margin-top: 15px; padding-left: 5px; }
.stars svg { width: 23px; height: 23px; fill: #738f93; }
.scroll { display: flex; flex-direction: column; align-items: center; width: 21px; background: #f1f1f1; }
.scroll svg { width: 10px; height: 6px; margin-top: 9px; }
.scroll i { width: 17px; height: 241px; margin-top: 6px; background: #c1c1c1; }
.scroll .down { margin-top: auto; margin-bottom: 7px; }

/* taskbar */
.taskbar { display: flex; align-items: center; height: 60px; border-top: 1px solid #cfcfc4; background: linear-gradient(180deg, transparent, #dcdcdc 85%), linear-gradient(90deg, #dcdddd 0, #dcdddc 280px, #e2e0cc 420px, #e1dfcb 1300px, #e3e2d0 1920px); }
.weather { display: flex; align-items: center; width: 382.500px; padding: 0 0 2px 26px; gap: 9px; font-size: 15px; line-height: 20px; color: #1b1b1b; letter-spacing: -.35px; }
.weather svg { width: 30px; height: 24px; margin-bottom: 2px; }
.cloudy { color: #555; }
.apps { display: flex; }
.apps > div { position: relative; width: 55px; height: 60px; padding: 14px 12.500px 0 12px; }
.apps > div > svg { width: 30px; height: 30px; }
.apps .run::after { content: ""; position: absolute; left: 24px; bottom: 6px; width: 8px; height: 4px; border-radius: 2px; background: #7d7d7a; }
.apps .current { margin: 6px 2px 6px 4px; width: 49px; height: 48px; padding: 9px 9px 0; border-radius: 5px; background: #f0f0e9; border-right: 1px solid #dadad0; box-shadow: 0 0 1px #aaa; }
.apps .current::after { content: ""; position: absolute; left: 14px; bottom: 0; width: 20px; height: 4px; border-radius: 2px; background: #0a78d4; }
.n18 { position: absolute; left: 25px; top: 3px; width: 20px; height: 20px; border-radius: 50%; background: #555; color: #d8a42a; font-size: 10.500px; line-height: 20px; text-align: center; }
.apps > div > .person { position: absolute; left: 27px; top: 8px; width: 20px; height: 20px; }
.pc { font: bold 9.500px "DejaVu Sans", sans-serif; fill: #fff; }
.tray { display: flex; align-items: center; margin-left: auto; margin-right: 18px; padding-bottom: 3px; font-size: 15px; line-height: 20px; color: #1b1b1b; text-align: center; }
.tray svg { fill: none; stroke: #1b1b1b; stroke-width: 1.300; margin-top: 2px; }
.up { width: 16px; height: 9px; margin-right: 20px; }
.lang { width: 30px; margin-right: 22px; letter-spacing: -.5px; }
.wifi { width: 20px; height: 15px; margin-right: 10px; }
.wifi circle { fill: #1b1b1b; stroke: none; }
.vol { width: 20px; height: 16px; margin-right: 10px; }
.bat { width: 20px; height: 15px; margin-right: 19px; }
.clock { width: 64px; text-align: right; letter-spacing: -.3px; white-space: nowrap; }
.clock p { margin-left: -4px; }
```
